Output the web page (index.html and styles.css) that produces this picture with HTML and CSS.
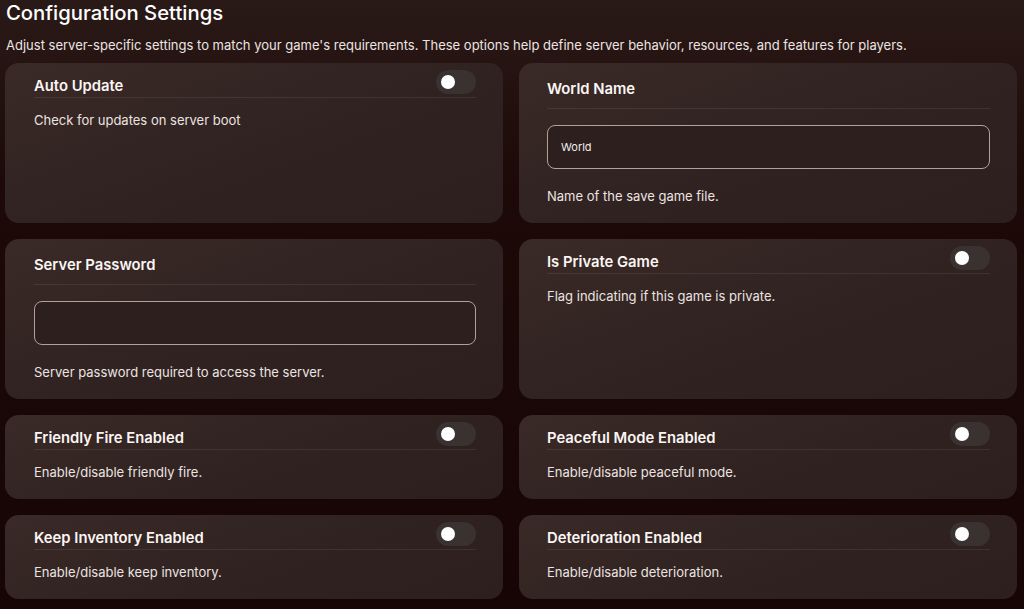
FILE: index.html
```html
<!DOCTYPE html>
<html lang="en">

<head>
    <meta charset="UTF-8">
    <meta name="viewport" content="width=device-width, initial-scale=1.0">
    <title>Configuration Settings</title>
    <link rel="stylesheet" href="styles.css">
</head>

<body>
    <div class='config_page'>
        <h1 class='config_title'>Configuration Settings</h1>
        <p class='config_intro'>Adjust server-specific settings to match your game's requirements. These options help define server behavior, resources, and features for players.</p>

        <div class='config_grid'>
            <div class='config_card'>
                <div class='card_head'>
                    <div class='card_label'>Auto Update</div>
                    <div class='toggle'></div>
                </div>
                <div class='card_desc'>Check for updates on server boot</div>
            </div>

            <div class='config_card'>
                <div class='card_head text_head'>
                    <div class='card_label'>World Name</div>
                </div>
                <input class='card_input' type='text' value='World'>
                <div class='card_desc'>Name of the save game file.</div>
            </div>

            <div class='config_card'>
                <div class='card_head text_head'>
                    <div class='card_label'>Server Password</div>
                </div>
                <input class='card_input' type='text' value=''>
                <div class='card_desc'>Server password required to access the server.</div>
            </div>

            <div class='config_card'>
                <div class='card_head'>
                    <div class='card_label'>Is Private Game</div>
                    <div class='toggle'></div>
                </div>
                <div class='card_desc'>Flag indicating if this game is private.</div>
            </div>

            <div class='config_card'>
                <div class='card_head'>
                    <div class='card_label'>Friendly Fire Enabled</div>
                    <div class='toggle'></div>
                </div>
                <div class='card_desc'>Enable/disable friendly fire.</div>
            </div>

            <div class='config_card'>
                <div class='card_head'>
                    <div class='card_label'>Peaceful Mode Enabled</div>
                    <div class='toggle'></div>
                </div>
                <div class='card_desc'>Enable/disable peaceful mode.</div>
            </div>

            <div class='config_card'>
                <div class='card_head'>
                    <div class='card_label'>Keep Inventory Enabled</div>
                    <div class='toggle'></div>
                </div>
                <div class='card_desc'>Enable/disable keep inventory.</div>
            </div>

            <div class='config_card'>
                <div class='card_head'>
                    <div class='card_label'>Deterioration Enabled</div>
                    <div class='toggle'></div>
                </div>
                <div class='card_desc'>Enable/disable deterioration.</div>
            </div>
        </div>
    </div>
</body>

</html>
```

FILE: styles.css
```css
html,
body {
    margin: 0;
    height: 100%;
}

body {
    background:
        linear-gradient(180deg, #2a1a17 0%, #1c0908 30%, #170505 100%);
    color: #fff;
    font-family: Inter, "Noto Sans", sans-serif;
    overflow: hidden;
}

.config_page {
    padding: 0 6px 0 5px;
}

.config_title {
    margin: 0;
    padding: 1px 0 0 1px;
    font-size: 20.3px;
    font-weight: 500;
    line-height: 24px;
}

.config_intro {
    margin: 10px 0 0 1px;
    font-size: 13px;
    line-height: 20px;
    color: #ece4e2;
}

.config_grid {
    margin-top: 8px;
    display: grid;
    grid-template-columns: 498px 498px;
    gap: 16px;
}

.config_card {
    background: linear-gradient(160deg, #3a2a27 0%, #2f2220 55%, #2c1f1e 100%);
    border-radius: 14px;
    padding: 7px 27px 17px 29px;
    display: flex;
    flex-direction: column;
}

.config_card:nth-child(even) {
    padding-left: 28px;
}

.card_head {
    display: flex;
    justify-content: space-between;
    align-items: flex-end;
    border-bottom: 1px solid rgba(255, 255, 255, .08);
}

.card_head .toggle {
    margin-bottom: 3px;
}

.text_head {
    padding: 8px 0;
}

.card_label {
    font-size: 14.8px;
    font-weight: 600;
    line-height: 22px;
    color: #fbf6f4;
}

.toggle {
    width: 40px;
    height: 24px;
    border-radius: 12px;
    background: #3a3230;
    position: relative;
    flex-shrink: 0;
}

.toggle:after {
    content: '';
    position: absolute;
    width: 14px;
    height: 14px;
    border-radius: 50%;
    background: white;
    left: 5px;
    top: 5px;
}

.card_desc {
    margin-top: 12px;
    font-size: 13px;
    line-height: 20px;
    color: #ebe3e1;
}

.card_input {
    margin-top: 16px;
    height: 44px;
    box-sizing: border-box;
    width: 100%;
    border: 1px solid #b59f9b;
    border-radius: 8px;
    background: #2c1f1e;
    color: #f2ecea;
    font-family: inherit;
    font-size: 11px;
    padding: 0 13px;
    outline: none;
}

.card_input + .card_desc {
    margin-top: 17px;
}
```
